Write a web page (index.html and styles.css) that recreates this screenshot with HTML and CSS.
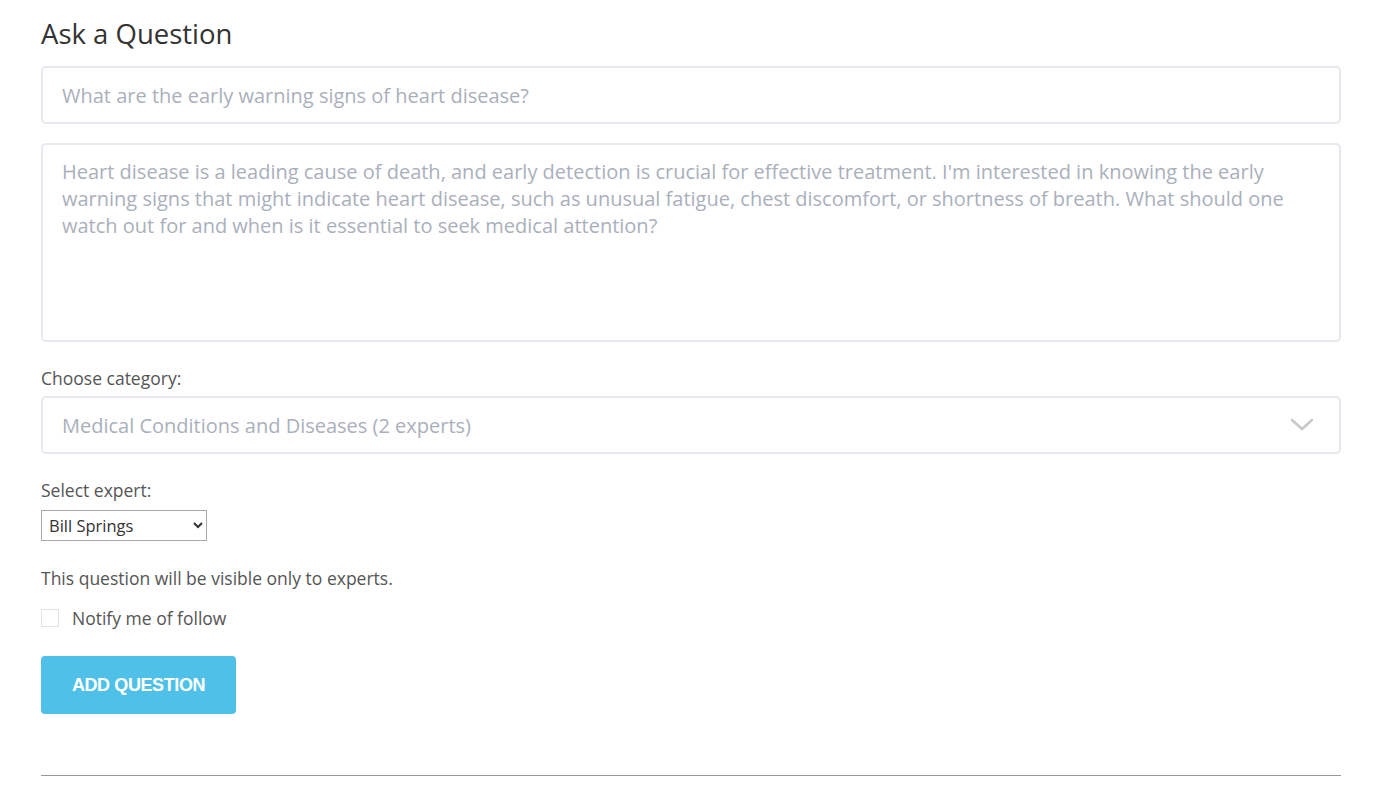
FILE: index.html
```html
<!DOCTYPE html>
<html lang="en">
<head>
  <meta charset="UTF-8" />
  <meta name="viewport" content="width=device-width, initial-scale=1.0" />
  <title>Ask a Question</title>
  <link rel="stylesheet" href="styles.css">
</head>
<body>
  <div class="container">
    <h1>Ask a Question</h1>
    <form class="ask-form">
      <input class="field title-field" type="text" placeholder="What are the early warning signs of heart disease?" />
      <textarea class="field body-field" placeholder="Heart disease is a leading cause of death, and early detection is crucial for effective treatment. I'm interested in knowing the early warning signs that might indicate heart disease, such as unusual fatigue, chest discomfort, or shortness of breath. What should one watch out for and when is it essential to seek medical attention?"></textarea>

      <label class="label category-label">Choose category:</label>
      <div class="select-wrap">
        <select class="field category-select">
          <option>Medical Conditions and Diseases (2 experts)</option>
        </select>
        <svg class="chevron" width="24" height="14" viewBox="0 0 24 14">
          <path d="M2 2 L12 11 L22 2" fill="none" stroke="#c8c8c8" stroke-width="2.6" stroke-linecap="round" stroke-linejoin="round"/>
        </svg>
      </div>

      <label class="label expert-label">Select expert:</label>
      <select class="expert-select">
        <option>Bill Springs</option>
      </select>

      <p class="note">This question will be visible only to experts.</p>

      <label class="notify">
        <span class="checkbox"></span>
        <span>Notify me of follow</span>
      </label>

      <button class="submit" type="button">ADD QUESTION</button>
    </form>
    <hr class="divider" />
  </div>
</body>
</html>
```

FILE: styles.css
```css
body {
  margin: 0;
  font-family: "Open Sans", Arial, sans-serif;
  color: #555;
  background: #fff;
}
.container {
  width: 1300px;
  padding: 16px 0 0 41px;
}
h1 {
  margin: 0;
  font-size: 27.5px;
  font-weight: 400;
  line-height: 36px;
  color: #333;
}
.ask-form {
  display: flex;
  flex-direction: column;
  align-items: flex-start;
}
.field {
  box-sizing: border-box;
  width: 100%;
  border: 2px solid #e6e9ee;
  border-radius: 5px;
  padding: 0 19px;
  font-family: "Open Sans", Arial, sans-serif;
  font-size: 20px;
  color: #555;
  background: #fff;
  outline: none;
}
.field::placeholder {
  color: #aab0bb;
}
.title-field {
  margin-top: 14px;
  height: 58px;
}
.body-field {
  margin-top: 19px;
  height: 199px;
  padding: 13px 19px;
  line-height: 27px;
  resize: none;
}
.label {
  display: block;
  font-size: 17.5px;
  line-height: 24px;
  color: #555;
}
.category-label {
  margin-top: 24px;
}
.select-wrap {
  position: relative;
  width: 100%;
  margin-top: 6px;
}
.category-select {
  height: 58px;
  appearance: none;
  -webkit-appearance: none;
  color: #aab0bb;
}
.chevron {
  position: absolute;
  right: 27px;
  top: 22px;
  pointer-events: none;
}
.expert-label {
  margin-top: 24px;
}
.expert-select {
  margin-top: 8px;
  width: 166px;
  height: 31px;
  border: 1px solid #a9a9a9;
  border-radius: 0;
  padding: 0 3px;
  font-family: "Open Sans", Arial, sans-serif;
  font-size: 16.5px;
  color: #333;
  background: #fff;
}
.note {
  margin: 25px 0 0;
  font-size: 17.5px;
  line-height: 24px;
}
.notify {
  display: flex;
  align-items: center;
  margin-top: 16px;
  font-size: 17.5px;
  line-height: 24px;
}
.checkbox {
  box-sizing: border-box;
  width: 18px;
  height: 18px;
  border: 1px solid #e3e3e3;
  margin-right: 13px;
}
.submit {
  margin-top: 26px;
  width: 195px;
  height: 58px;
  border: none;
  border-radius: 4px;
  background: #4fc1e9;
  color: #fff;
  font-family: "Liberation Sans", Arial, sans-serif;
  font-size: 18px;
  font-weight: 700;
  letter-spacing: -0.4px;
  cursor: pointer;
}
.divider {
  margin: 61px 0 0;
  border: none;
  border-top: 1px solid #999;
  width: 1300px;
}
```
